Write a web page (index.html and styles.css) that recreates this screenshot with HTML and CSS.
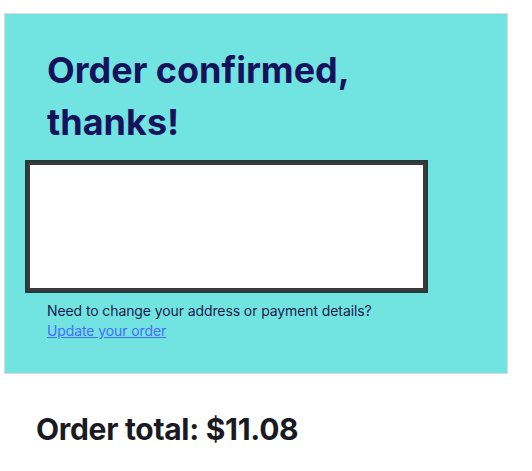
FILE: index.html
```html
<!DOCTYPE html>
<html>
<head>
<meta charset="utf-8">
<link rel="stylesheet" href="styles.css">
</head>
<body>
<div class="page">
  <section class="card">
    <h1 class="title">Order confirmed,<br>thanks!</h1>
    <div class="frame"></div>
    <div class="help">
      <p class="help-text">Need to change your address or payment details?</p>
      <a class="help-link" href="#">Update your order</a>
    </div>
  </section>
  <h2 class="total">Order total: $11.08</h2>
</div>
</body>
</html>
```

FILE: styles.css
```css
html, body {
  margin: 0;
  padding: 0;
  background: #ffffff;
}
.page {
  padding: 13px 24px 0 4px;
  font-family: Inter, "Liberation Sans", sans-serif;
}
.card {
  background: #71e4e2;
  border: 1px solid #dcdcdc;
  padding: 0 20px 32px 20px;
}
.title {
  margin: 0;
  padding: 30px 0 12px 22px;
  font-size: 36px;
  line-height: 52px;
  font-weight: 700;
  color: #16135c;
  letter-spacing: 0;
}
.frame {
  width: 399px;
  height: 129px;
  background: #ffffff;
  border: 2px solid #213a3a;
  box-shadow: inset 0 0 0 3px #3a3a3a;
}
.help {
  padding: 8px 0 0 22px;
  font-size: 14px;
  line-height: 20px;
  letter-spacing: -0.1px;
}
.help-text {
  margin: 0;
  color: #1b1a4a;
}
.help-link {
  color: #4a6cf7;
  text-decoration: underline;
}
.total {
  margin: 0;
  padding: 35px 0 0 32px;
  font-size: 30px;
  line-height: 40px;
  font-weight: 700;
  color: #1a1a22;
  letter-spacing: -0.3px;
}
```
